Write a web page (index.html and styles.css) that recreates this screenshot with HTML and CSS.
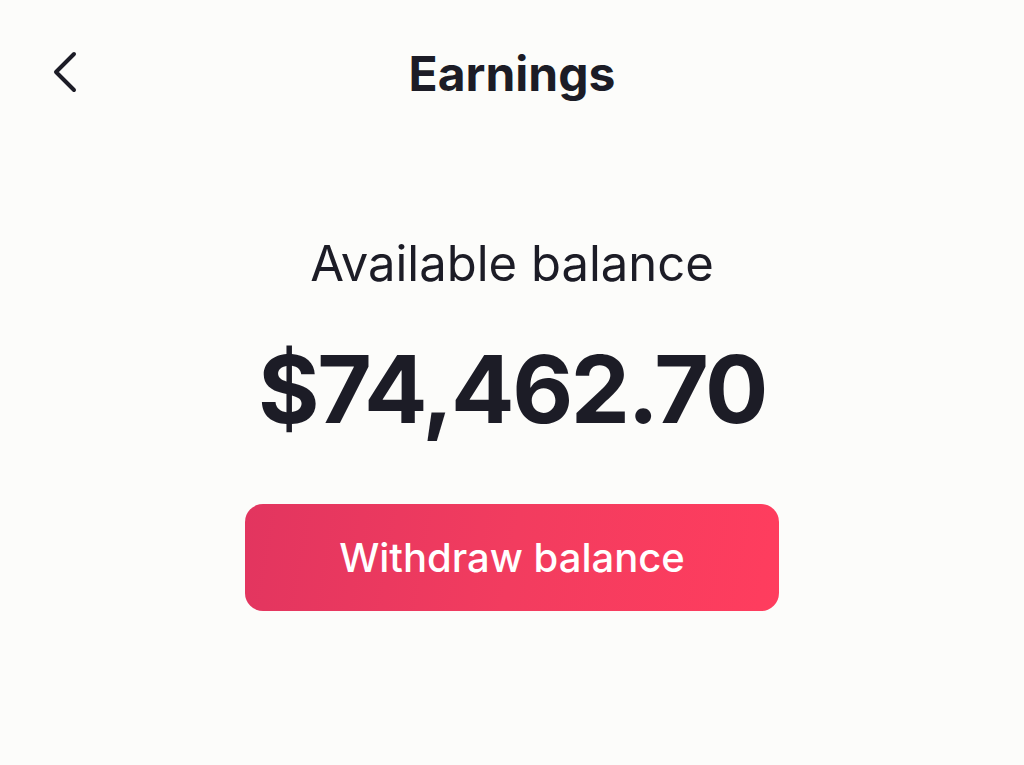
FILE: index.html
```html
<!DOCTYPE html>
<html>

<head>
  <meta charset="UTF-8">
  <title>Earnings</title>
  <link rel="stylesheet" href="styles.css">
</head>

<body>
  <div class="topbar">
    <button class="back" aria-label="Voltar">
      <svg width="26" height="42" viewBox="0 0 26 42">
        <path d="M23 3 L5 21 L23 39" fill="none" stroke="#1c1c26" stroke-width="4" stroke-linecap="round" stroke-linejoin="round"/>
      </svg>
    </button>
    <h1 class="title">Earnings</h1>
  </div>

  <div class="balance">
    <p class="label">Available balance</p>
    <p class="amount">$74,462.70</p>
    <button class="btn-withdraw">Withdraw balance</button>
  </div>
</body>
</html>
```

FILE: styles.css
```css
body {
  margin: 0;
  background-color: #fcfcfa;
  font-family: Inter, "Noto Sans", sans-serif;
  color: #1c1c26;
}

.topbar {
  display: flex;
  justify-content: center;
  align-items: center;
  height: 146px;
  position: relative;
}

.back {
  position: absolute;
  left: 51px;
  top: 51px;
  background: none;
  border: none;
  padding: 0;
}

.title {
  margin: 0;
  font-size: 48px;
  font-weight: 700;
}

.balance {
  display: flex;
  flex-direction: column;
  align-items: center;
}

.label {
  margin: 88px 0 0 0;
  font-size: 49px;
  font-weight: 400;
}

.amount {
  margin: 39px 0 0 0;
  font-size: 94px;
  font-weight: 700;
  letter-spacing: -2.4px;
}

.btn-withdraw {
  margin-top: 58px;
  width: 534px;
  height: 107px;
  border: none;
  border-radius: 18px;
  background: linear-gradient(100deg, #e2355f 0%, #f23c5f 50%, #ff3d5e 100%);
  color: #ffffff;
  font-family: Inter, "Noto Sans", sans-serif;
  font-size: 40px;
  font-weight: 500;
}
```
